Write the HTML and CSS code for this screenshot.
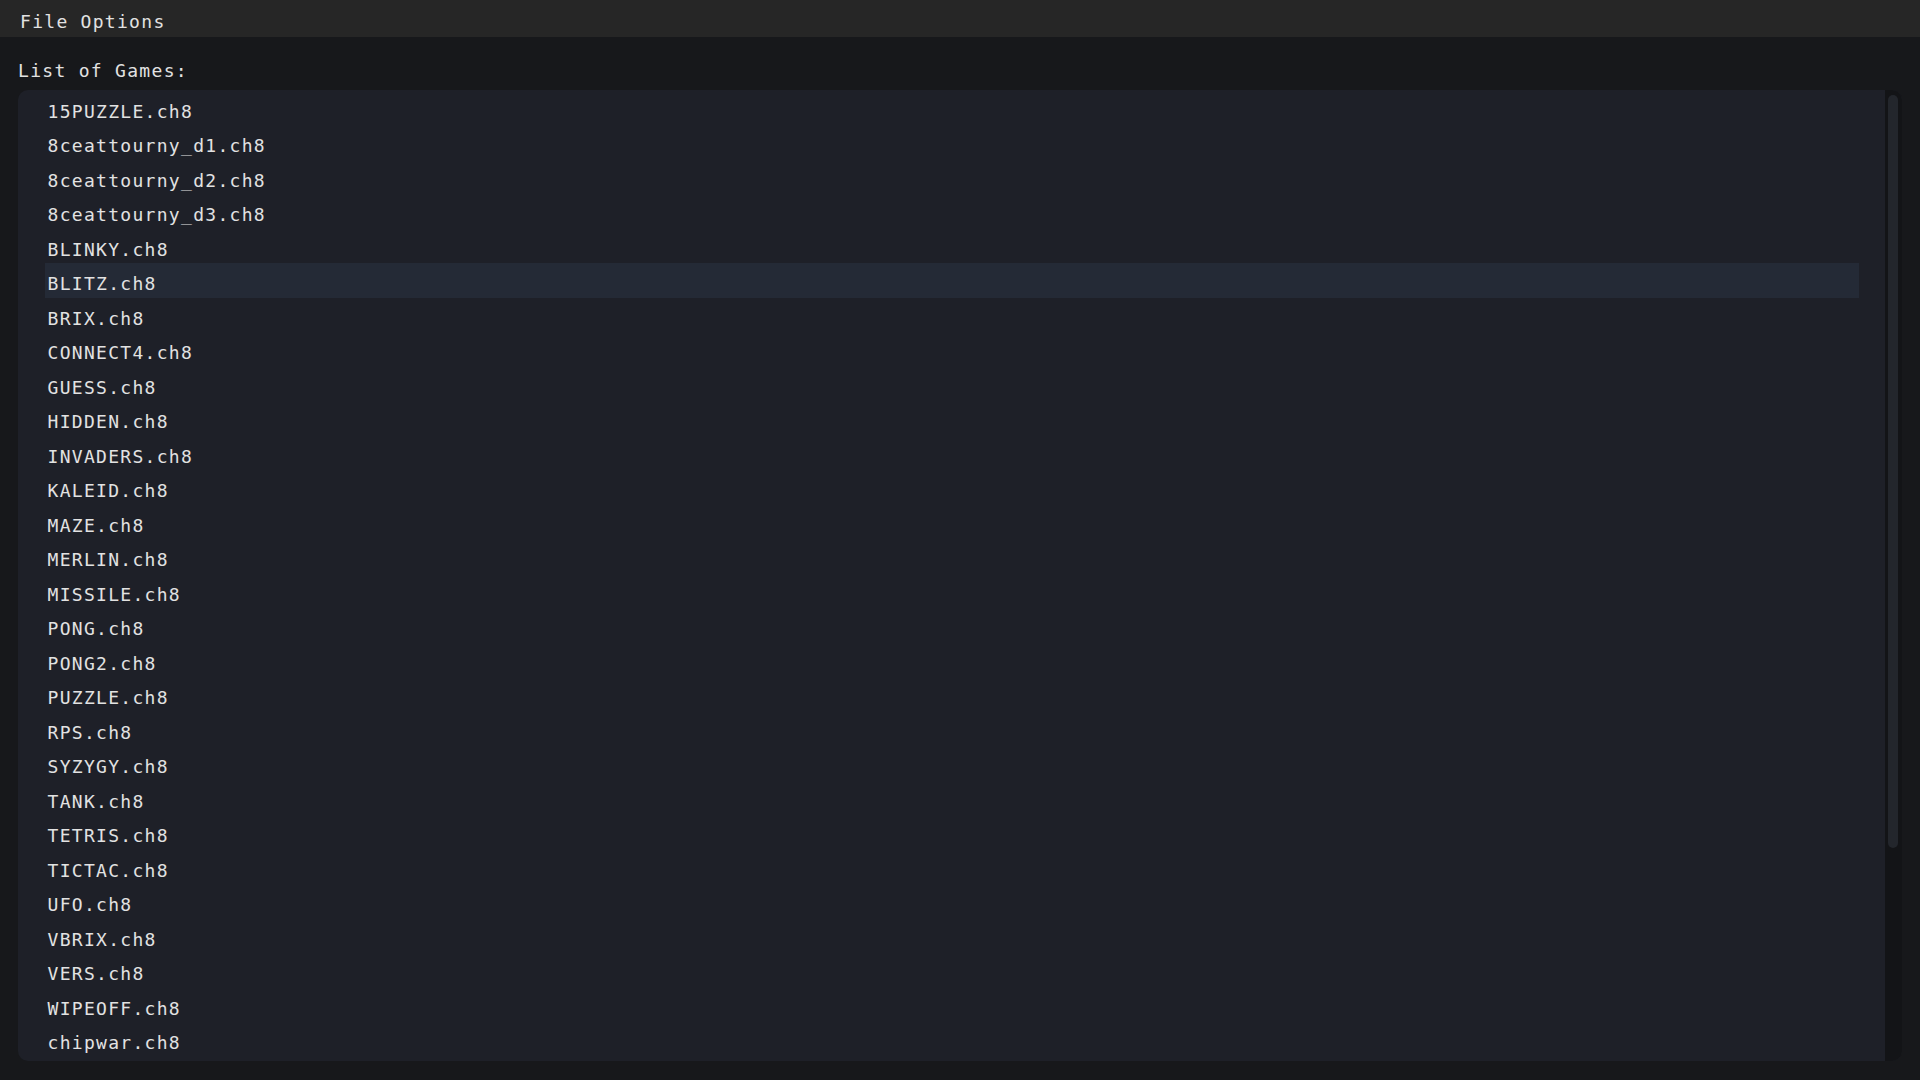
FILE: index.html
```html
<!DOCTYPE html>
<html lang="en">
<head>
    <meta charset="UTF-8">
    <meta name="viewport" content="width=device-width, initial-scale=1.0">
    <title>CHIP-8 Games</title>
    <link rel="stylesheet" href="styles.css">
</head>
<body>
    <div class="menubar">
        <span class="menu-item">File</span>
        <span class="menu-item">Options</span>
    </div>

    <div class="label">List of Games:</div>

    <div class="panel">
        <ul class="game-list">
            <li>15PUZZLE.ch8</li>
            <li>8ceattourny_d1.ch8</li>
            <li>8ceattourny_d2.ch8</li>
            <li>8ceattourny_d3.ch8</li>
            <li>BLINKY.ch8</li>
            <li class="hovered">BLITZ.ch8</li>
            <li>BRIX.ch8</li>
            <li>CONNECT4.ch8</li>
            <li>GUESS.ch8</li>
            <li>HIDDEN.ch8</li>
            <li>INVADERS.ch8</li>
            <li>KALEID.ch8</li>
            <li>MAZE.ch8</li>
            <li>MERLIN.ch8</li>
            <li>MISSILE.ch8</li>
            <li>PONG.ch8</li>
            <li>PONG2.ch8</li>
            <li>PUZZLE.ch8</li>
            <li>RPS.ch8</li>
            <li>SYZYGY.ch8</li>
            <li>TANK.ch8</li>
            <li>TETRIS.ch8</li>
            <li>TICTAC.ch8</li>
            <li>UFO.ch8</li>
            <li>VBRIX.ch8</li>
            <li>VERS.ch8</li>
            <li>WIPEOFF.ch8</li>
            <li>chipwar.ch8</li>
        </ul>
        <div class="scrollbar">
            <div class="thumb"></div>
        </div>
    </div>
</body>
</html>
```

FILE: styles.css
```css
body {
    font-family: 'DejaVu Sans Mono', monospace;
    font-size: 18px;
    letter-spacing: 1.3px;
    background-color: #17181b;
    color: #e2e2e2;
    margin: 0;
    padding: 0;
    height: 1080px;
    overflow: hidden;
}

.menubar {
    height: 37px;
    box-sizing: border-box;
    padding: 6px 0 0 20px;
    line-height: 31px;
    background-color: #262626;
    display: flex;
    gap: 12px;
}

.label {
    margin: 23px 0 0 18px;
    height: 30px;
    line-height: 21px;
}

.panel {
    margin: 0 18px;
    height: 971px;
    border-radius: 10px;
    background-color: #1e2028;
    display: flex;
    overflow: hidden;
}

.game-list {
    list-style-type: none;
    flex: 1;
    margin: 0;
    padding: 0.5px 26px 0 27px;
    overflow: hidden;
}

.game-list li {
    height: 34.5px;
    box-sizing: border-box;
    padding: 8px 0 0 2.5px;
    line-height: 25.5px;
    white-space: nowrap;
}

.game-list li.hovered {
    background-color: #242a36;
}

.scrollbar {
    width: 17px;
    flex-shrink: 0;
    box-sizing: border-box;
    padding: 5px 4px 0 3px;
    background-color: #131417;
}

.thumb {
    height: 753px;
    border-radius: 5px;
    background-color: #23262c;
}
```
